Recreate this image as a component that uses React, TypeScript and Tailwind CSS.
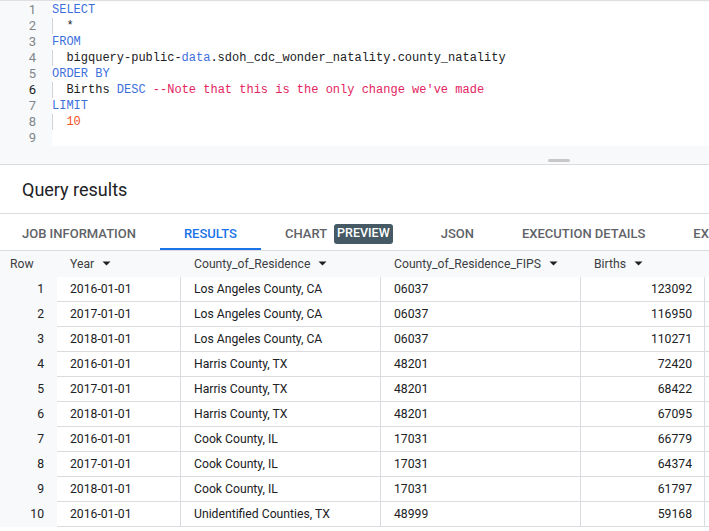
import React from 'react';

const KW = 'text-[#3d6fdc]';

type Tok = { t: string; c?: string };

const codeLines: { indent: boolean; toks: Tok[] }[] = [
  { indent: false, toks: [{ t: 'SELECT', c: KW }] },
  { indent: true, toks: [{ t: '*' }] },
  { indent: false, toks: [{ t: 'FROM', c: KW }] },
  {
    indent: true,
    toks: [
      { t: 'bigquery-public-' },
      { t: 'data', c: KW },
      { t: '.sdoh_cdc_wonder_natality.county_natality' },
    ],
  },
  { indent: false, toks: [{ t: 'ORDER BY', c: KW }] },
  {
    indent: true,
    toks: [
      { t: 'Births ' },
      { t: 'DESC', c: KW },
      { t: " --Note that this is the only change we've made", c: 'text-[#e3245f]' },
    ],
  },
  { indent: false, toks: [{ t: 'LIMIT', c: KW }] },
  { indent: true, toks: [{ t: '10', c: 'text-[#f4511e]' }] },
  { indent: false, toks: [] },
];

const rows = [
  ['2016-01-01', 'Los Angeles County, CA', '06037', '123092'],
  ['2017-01-01', 'Los Angeles County, CA', '06037', '116950'],
  ['2018-01-01', 'Los Angeles County, CA', '06037', '110271'],
  ['2016-01-01', 'Harris County, TX', '48201', '72420'],
  ['2017-01-01', 'Harris County, TX', '48201', '68422'],
  ['2018-01-01', 'Harris County, TX', '48201', '67095'],
  ['2016-01-01', 'Cook County, IL', '17031', '66779'],
  ['2017-01-01', 'Cook County, IL', '17031', '64374'],
  ['2018-01-01', 'Cook County, IL', '17031', '61797'],
  ['2016-01-01', 'Unidentified Counties, TX', '48999', '59168'],
];

const Caret = () => (
  <svg width="9" height="5" viewBox="0 0 9 5" className="ml-[8px] shrink-0">
    <path d="M0.5 0.5h8L4.5 4.5z" fill="#202124" />
  </svg>
);

const HeaderCell: React.FC<{ label: string; w: string }> = ({ label, w }) => (
  <div className={`${w} shrink-0 flex items-center px-[13px]`}>
    <span>{label}</span>
    <Caret />
  </div>
);

const Tab: React.FC<{ label: string; active?: boolean; badge?: string }> = ({ label, active, badge }) => (
  <div
    className={`relative h-full flex items-center pt-[3px] px-6 shrink-0 text-[13px] font-medium ${
      active ? 'text-[#1a73e8]' : 'text-[#5f6368]'
    }`}
  >
    {label}
    {badge && (
      <span className="ml-[7px] bg-[#455a64] text-white text-[12.5px] rounded-[3px] px-[3px] h-[20px] flex items-center">
        {badge}
      </span>
    )}
    {active && <div className="absolute left-0 right-0 bottom-0 h-[2px] bg-[#1a73e8]" />}
  </div>
);

export default function App() {
  return (
    <div className="w-[709px] h-[531px] overflow-hidden bg-white text-[#202124] font-['Roboto',sans-serif]">
      {/* editor */}
      <div className="bg-[#f8f9fa] border-t border-[#e0e0e0]">
        <div className="flex pt-[1px]">
          <div className="w-[52px] shrink-0 pr-[16px] text-right text-[13px] text-[#80868b]">
            {codeLines.map((_, i) => (
              <div key={i} className={`h-[16px] leading-[16px] ${i === 5 ? 'text-[#202124]' : ''}`}>
                {i + 1}
              </div>
            ))}
          </div>
          <div className="flex-1 bg-white font-['Liberation_Mono',monospace] text-[12px] text-[#202124] whitespace-pre">
            {codeLines.map((l, i) => (
              <div key={i} className="h-[16px] leading-[16px] flex">
                {l.indent && <div className="w-[14.4px] shrink-0 border-l border-[#d3d3d3]" />}
                {l.toks.map((tk, j) => (
                  <span key={j} className={tk.c}>
                    {tk.t}
                  </span>
                ))}
              </div>
            ))}
          </div>
        </div>
        <div className="h-[19px] border-b border-[#dadce0] flex items-end pb-[2px]">
          <div className="ml-[548px] w-[22px] h-[3px] bg-[#c8c8c8] rounded-sm" />
        </div>
      </div>

      {/* title */}
      <div className="h-[49px] flex items-center pl-[22px] border-b border-[#dadce0]">
        <h2 className="text-[18px] text-[#202124]">Query results</h2>
      </div>

      {/* tabs */}
      <div className="h-[37px] flex items-stretch border-b border-[#dadce0] -ml-[2px]">
        <Tab label="JOB INFORMATION" />
        <Tab label="RESULTS" active />
        <Tab label="CHART" badge="PREVIEW" />
        <Tab label="JSON" />
        <Tab label="EXECUTION DETAILS" />
        <Tab label="EXECUTION GRAPH" />
      </div>

      {/* table */}
      <div className="text-[12.2px]">
        <div className="h-[26px] flex items-center bg-[#f8f9fa] text-[#3c4043]">
          <div className="w-[57px] shrink-0 pl-[10px]">Row</div>
          <HeaderCell label="Year" w="w-[124px]" />
          <HeaderCell label="County_of_Residence" w="w-[200px]" />
          <HeaderCell label="County_of_Residence_FIPS" w="w-[200px]" />
          <HeaderCell label="Births" w="w-[124px]" />
        </div>
        {rows.map((r, i) => (
          <div key={i} className="h-[25px] flex">
            <div className="w-[57px] shrink-0 bg-[#f8f9fa] flex items-center justify-end pr-[13px]">{i + 1}</div>
            <div className="w-[124px] shrink-0 px-[13px] flex items-center border-b border-r border-[#dadce0]">{r[0]}</div>
            <div className="w-[200px] shrink-0 px-[13px] flex items-center border-b border-r border-[#dadce0]">{r[1]}</div>
            <div className="w-[200px] shrink-0 px-[13px] flex items-center border-b border-r border-[#dadce0]">{r[2]}</div>
            <div className="w-[124px] shrink-0 px-[12px] flex items-center justify-end border-b border-r border-[#dadce0]">{r[3]}</div>
            <div className="flex-1 border-b border-[#dadce0]" />
          </div>
        ))}
      </div>
    </div>
  );
}
